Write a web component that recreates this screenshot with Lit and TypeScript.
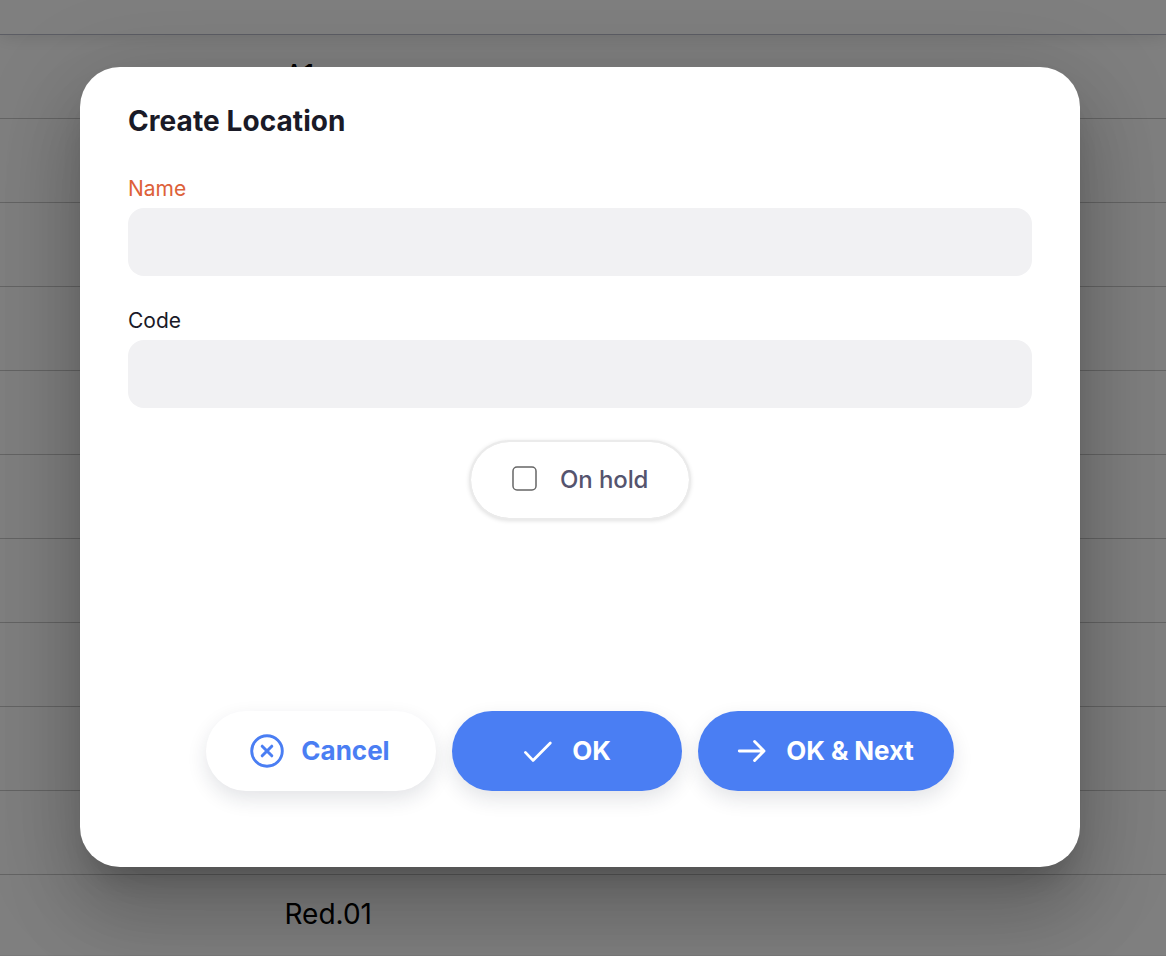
import { LitElement, html, css, svg } from "lit";
import { customElement } from "lit/decorators.js";

const icons = {
  cancel: svg`<circle cx="18" cy="18" r="15.3" stroke-width="2.9"/><path d="M13.2 13.2l9.6 9.6M22.8 13.2l-9.6 9.6" stroke-width="3"/>`,
  check: svg`<path d="M5.4 19.4l7.6 8L30.3 10" stroke-width="2.8"/>`,
  arrow: svg`<path d="M5.3 18h24.4M20.6 8.5l9.4 9.5-9.4 9.5" stroke-width="2.9"/>`,
};

@customElement("app-root")
export class AppRoot extends LitElement {
  static styles = css`
    :host {
      display: block;
      font-family: Inter, "Liberation Sans", sans-serif;
      color: #1a1a27;
    }
    * { box-sizing: border-box; }
    .screen {
      position: relative;
      width: 1166px;
      height: 956px;
      overflow: hidden;
      background: #fff;
    }
    .header {
      height: 35px;
      border-bottom: 1px solid #b9bac8;
      box-shadow: 0 2px 18px rgba(0, 0, 0, 0.12);
    }
    .row {
      height: 84px;
      padding: 0 0 3px 284.5px;
      border-bottom: 1px solid #c8c8c8;
      display: flex;
      align-items: center;
      font-size: 28px;
      color: #000;
    }
    .row:last-child { height: 81px; padding-bottom: 2px; border-color: #f2f2f2; }
    .backdrop {
      position: absolute;
      inset: 0;
      background: rgba(0, 0, 0, 0.5);
      padding: 67px 86px 89px 80px;
    }
    .dialog {
      width: 1000px;
      height: 800px;
      padding: 36px 48px 76px;
      border-radius: 40px;
      background: #fff;
      box-shadow:
        0 22px 30px -14px rgba(0, 0, 0, 0.2),
        0 48px 76px 6px rgba(0, 0, 0, 0.14),
        0 18px 92px 16px rgba(0, 0, 0, 0.12);
      display: flex;
      flex-direction: column;
    }
    .title {
      margin: 0 0 37px;
      font-size: 28px;
      line-height: 36px;
      font-weight: 700;
      letter-spacing: 0.08px;
    }
    .field { display: block; margin-bottom: 32px; }
    .label {
      display: block;
      font-size: 21px;
      line-height: 26px;
      margin-bottom: 6px;
    }
    .required { color: #dd6139; }
    .input {
      display: block;
      width: 100%;
      height: 68px;
      border: 0;
      outline: 0;
      padding: 0 24px;
      border-radius: 16px;
      background: #f1f1f3;
      font: inherit;
    }
    .toggle {
      align-self: center;
      width: 218px;
      height: 76px;
      margin-top: 2px;
      padding: 0 0 2px 41px;
      border-radius: 38px;
      display: flex;
      align-items: center;
      box-shadow: 0 0 0 2px #ebebeb, 0 1px 4px 2px rgba(0, 0, 0, 0.12);
      font-size: 24px;
      font-weight: 500;
      letter-spacing: -0.1px;
      color: #55546e;
    }
    .box {
      width: 25px;
      height: 25px;
      margin: 0 23px 2px 0;
      fill: none;
      stroke: #666;
      stroke-width: 1.5;
    }
    .actions {
      margin-top: auto;
      display: flex;
      justify-content: center;
      gap: 16px;
    }
    .btn {
      width: 230px;
      height: 80px;
      padding: 0 3px 0 0;
      border: 0;
      border-radius: 40px;
      display: flex;
      align-items: center;
      justify-content: center;
      gap: 16px;
      font: 700 26px/32px Inter, "Liberation Sans", sans-serif;
      color: #fff;
      background: #4a7ef3;
      box-shadow: 0 8px 20px rgba(23, 32, 56, 0.12);
      white-space: nowrap;
    }
    .cancel { background: #fff; color: #4a7ef3; }
    .wide { width: 256px; padding-right: 4px; letter-spacing: -0.1px; }
    .icon {
      width: 36px;
      height: 36px;
      fill: none;
      stroke: currentColor;
      stroke-linecap: round;
      stroke-linejoin: round;
    }
  `;

  private rows = ["A1", "", "", "", "", "", "", "", "", "", "Red.01"];

  private button(icon: keyof typeof icons, text: string, kind = "") {
    return html`<button class="btn ${kind}">
      <svg class="icon" viewBox="0 0 36 36">${icons[icon]}</svg><span>${text}</span>
    </button>`;
  }

  render() {
    return html`<div class="screen">
      <div class="header"></div>
      <div class="list">${this.rows.map((r) => html`<div class="row"><span>${r}</span></div>`)}</div>
      <div class="backdrop">
        <div class="dialog" role="dialog">
          <h2 class="title">Create Location</h2>
          <label class="field"><span class="label required">Name</span><input class="input" /></label>
          <label class="field"><span class="label">Code</span><input class="input" /></label>
          <div class="toggle" role="checkbox" aria-checked="false">
            <svg class="box" viewBox="0 0 25 25"><rect x="1" y="1" width="23" height="23" rx="4"/></svg><span>On hold</span>
          </div>
          <div class="actions">
            ${this.button("cancel", "Cancel", "cancel")}
            ${this.button("check", "OK")}
            ${this.button("arrow", "OK & Next", "wide")}
          </div>
        </div>
      </div>
    </div>`;
  }
}
